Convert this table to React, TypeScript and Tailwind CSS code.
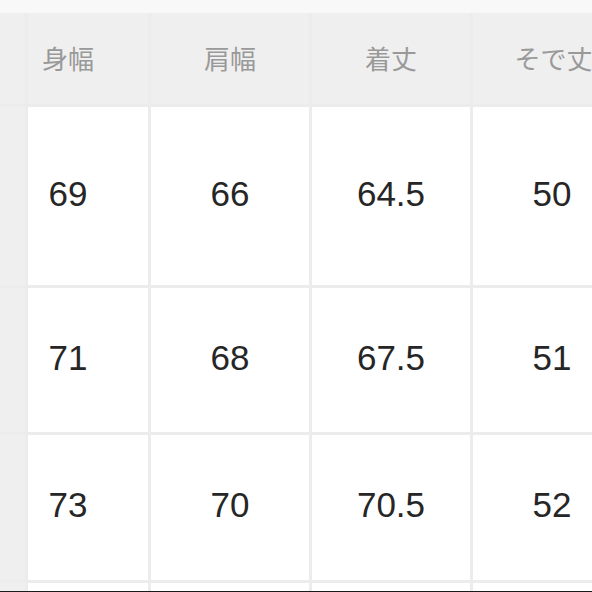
const headers = ['身幅', '肩幅', '着丈', 'そで丈']

const rows = [
  { id: 'r1', h: 'h-[178px]', values: ['69', '66', '64.5', '50'] },
  { id: 'r2', h: 'h-[144px]', values: ['71', '68', '67.5', '51'] },
  { id: 'r3', h: 'h-[145px]', values: ['73', '70', '70.5', '52'] },
]

export default function App() {
  return (
    <div className="relative h-[592px] w-[592px] overflow-hidden bg-[#f8f8f8] pt-[13px]">
      <div className="grid grid-cols-[25px_120px_158px_158px_160px] gap-[3px] bg-[#ececec]">
        {/* header */}
        <div className="h-[91px] bg-[#efefef]" />
        {headers.map((label, i) => (
          <div
            key={label}
            className={
              'flex h-[91px] items-center justify-center bg-[#efefef] pb-[2px] text-[26px] text-[#999999] font-["Noto_Sans_CJK_JP",sans-serif] ' +
              (i === 0 ? 'pr-[40px]' : i === 3 ? 'pl-[1px] whitespace-nowrap' : '')
            }
          >
            {label}
          </div>
        ))}

        {rows.map((row) => (
          <div key={row.id} className="contents">
            <div className={'bg-[#efefef] ' + row.h} />
            {row.values.map((v, i) => (
              <div
                key={i}
                className={
                  'flex items-center justify-center bg-white pb-[4px] text-[35px] text-[#262626] font-["Liberation_Sans",Arial,sans-serif] ' +
                  row.h +
                  (i === 0 ? ' pr-[40px]' : i === 3 ? ' pr-[2px]' : '')
                }
              >
                {v}
              </div>
            ))}
          </div>
        ))}

        <div className="h-[20px] bg-[#efefef]" />
        <div className="h-[20px] bg-white" />
        <div className="h-[20px] bg-white" />
        <div className="h-[20px] bg-white" />
        <div className="h-[20px] bg-white" />
      </div>
      <div className="absolute bottom-0 left-0 h-px w-full bg-[#1a1a1a]" />
    </div>
  )
}
